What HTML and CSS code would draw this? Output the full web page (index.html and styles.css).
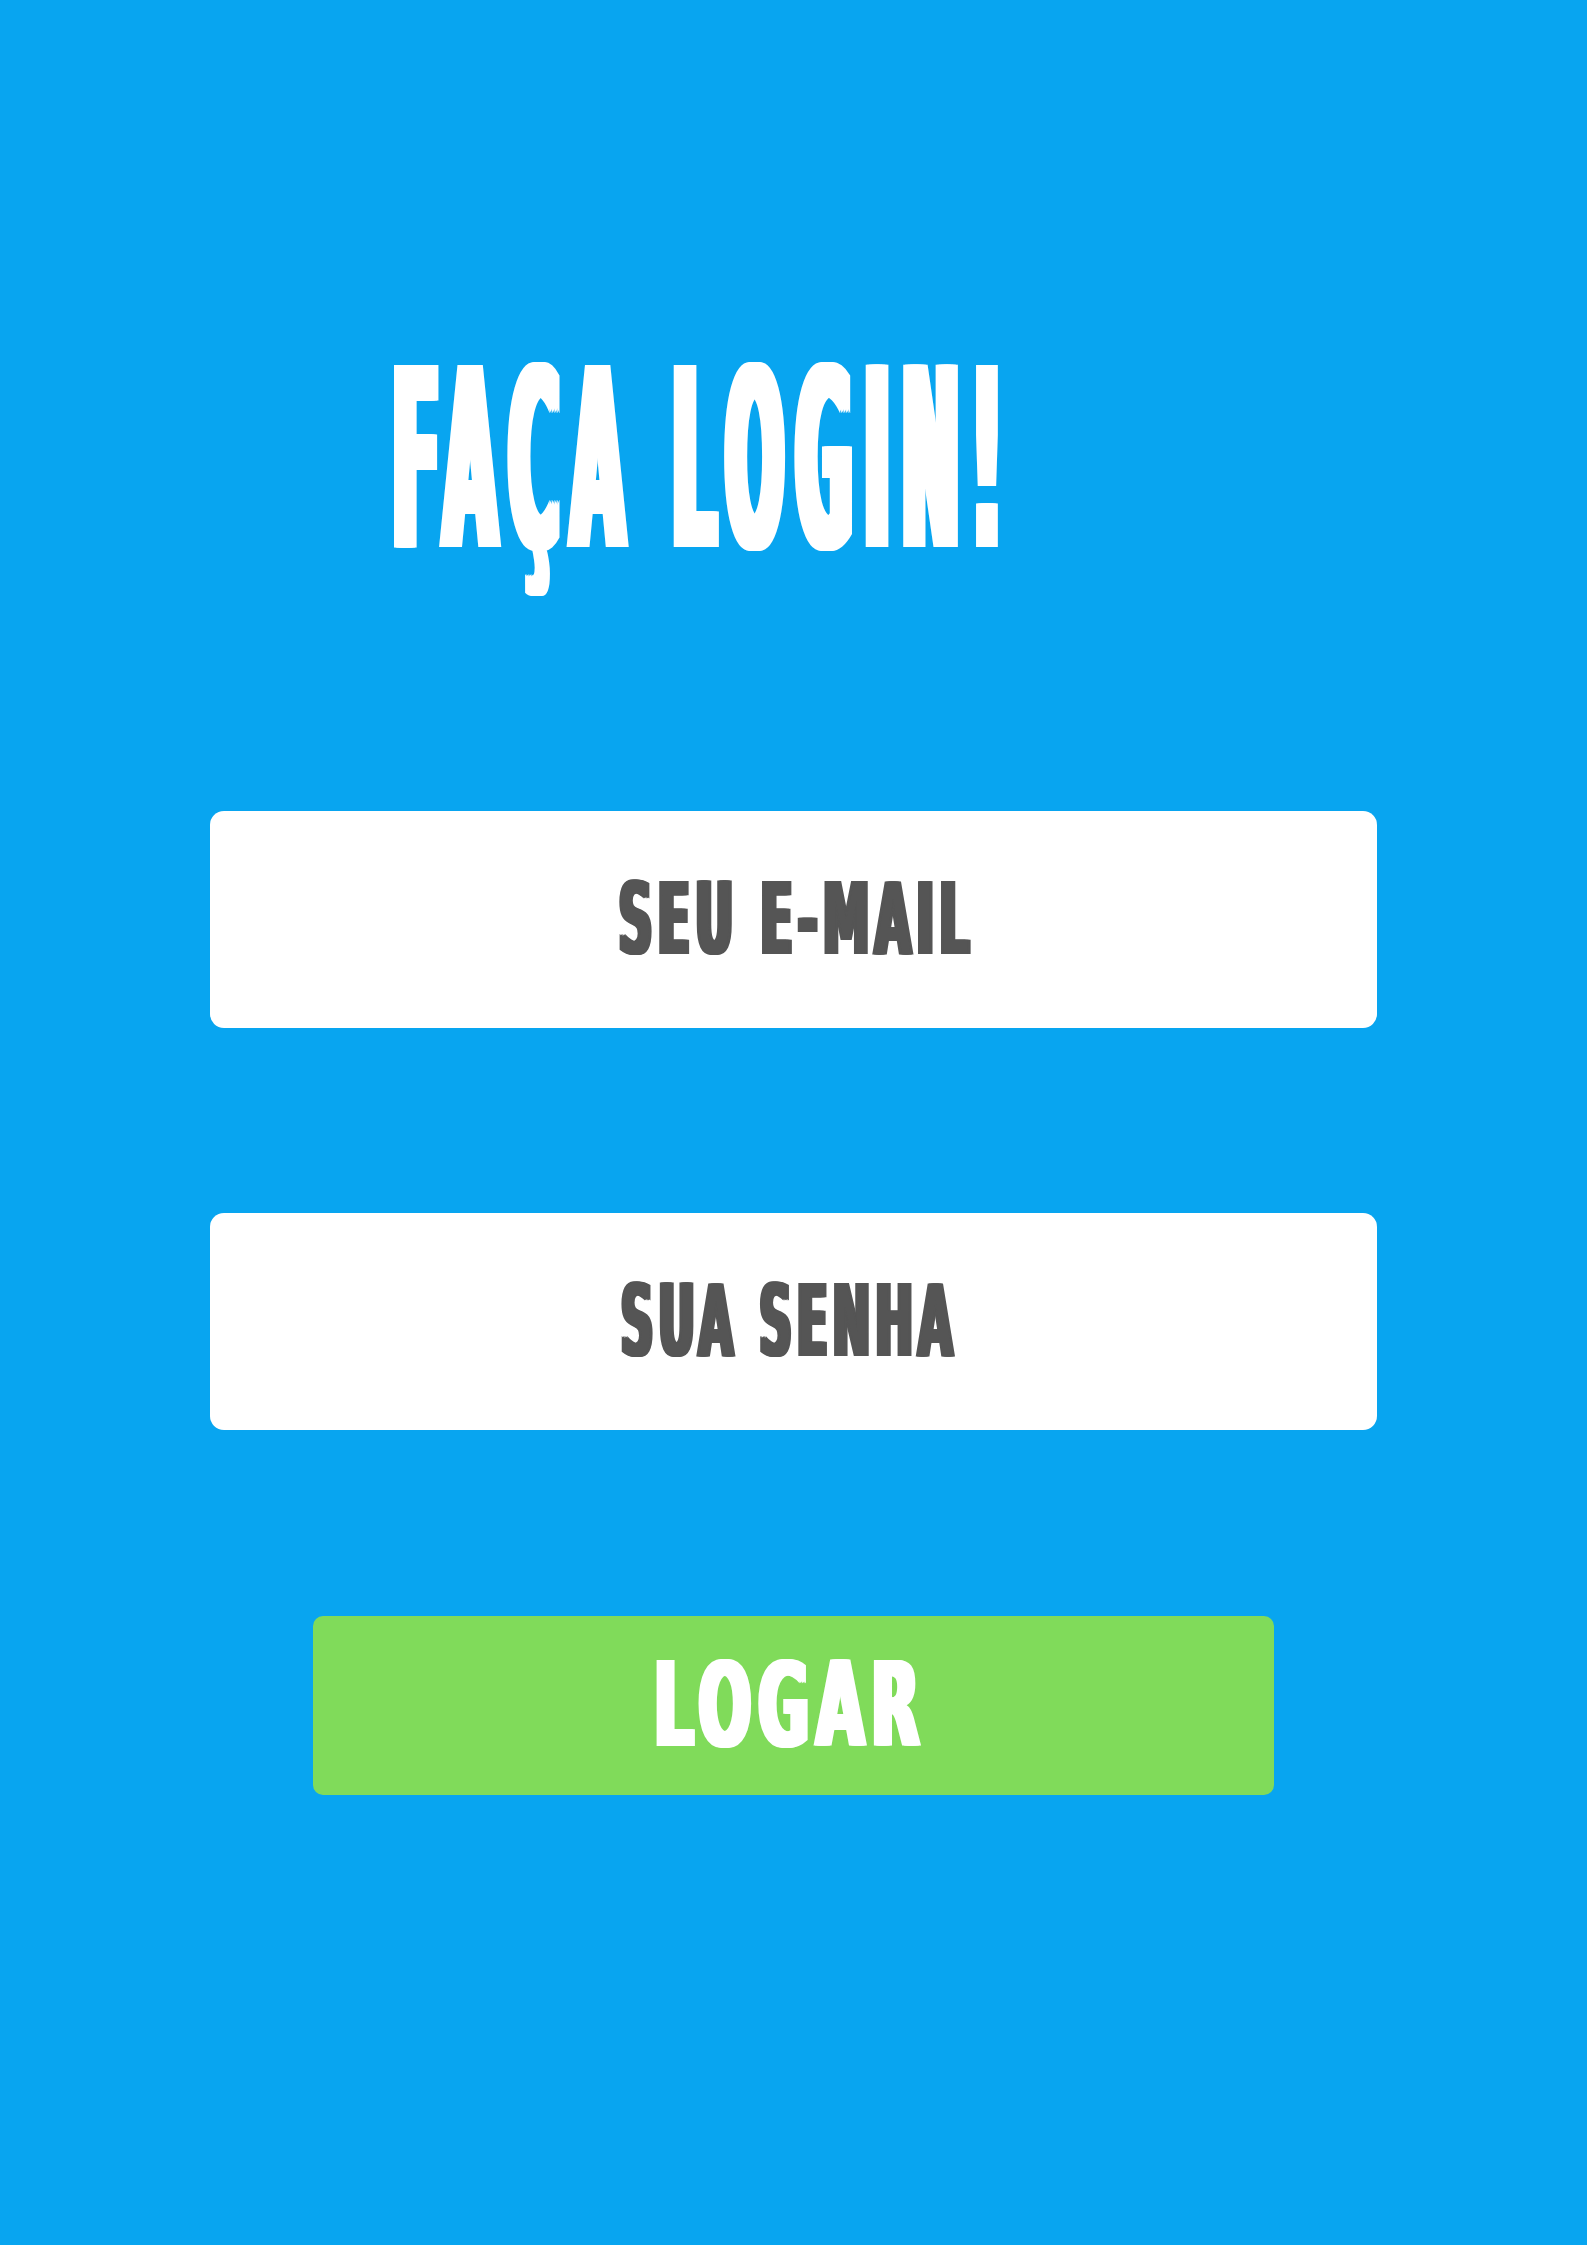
FILE: index.html
```html
<!DOCTYPE html>
<html lang="pt-BR">
<head>
<meta charset="utf-8">
<title>Faça login</title>
<link rel="stylesheet" href="styles.css">
</head>
<body>
<main class="page">
  <h1 class="title"><span class="squash squash-title">FAÇA LOGIN!</span></h1>
  <form class="form" onsubmit="return false">
    <label class="field field-email"><span class="squash squash-email">SEU E-MAIL</span></label>
    <label class="field field-pass"><span class="squash squash-pass">SUA SENHA</span></label>
    <button class="submit" type="submit"><span class="squash squash-btn">LOGAR</span></button>
  </form>
</main>
</body>
</html>
```

FILE: styles.css
```css
html, body {
  margin: 0;
  padding: 0;
}
body {
  background: #08a5f0;
  font-family: "DejaVu Sans", "Liberation Sans", sans-serif;
  font-weight: bold;
}
.page {
  min-height: 2245px;
  display: flex;
  flex-direction: column;
  align-items: center;
  padding-top: 334px;
  box-sizing: border-box;
}
.title {
  margin: 0;
  align-self: stretch;
  display: flex;
  justify-content: center;
  align-items: center;
  padding-right: 192px;
  height: 250px;
  font-size: 125px;
  line-height: 125px;
  color: #ffffff;
  font-weight: bold;
  white-space: nowrap;
}
.squash {
  display: inline-block;
  flex-shrink: 0;
  white-space: nowrap;
  transform-origin: center center;
}
.squash-title {
  letter-spacing: 22.5px;
  text-shadow: -3px 0 0 #fff, 3px 0 0 #fff, -6px 0 0 #fff, 6px 0 0 #fff, -9px 0 0 #fff, 9px 0 0 #fff;
  transform: translateX(6px) scale(0.546, 2);
}
.form {
  margin-top: 227px;
  display: flex;
  flex-direction: column;
  align-items: center;
}
.field {
  width: 1167px;
  height: 217px;
  background: #ffffff;
  border-radius: 14px;
  display: flex;
  align-items: center;
  justify-content: center;
  color: #555555;
  font-size: 99px;
  line-height: 99px;
}
.field-pass {
  margin-top: 185px;
}
.squash-email,
.squash-pass {
  letter-spacing: 12px;
  text-shadow: -3px 0 0 #555, 3px 0 0 #555, -6px 0 0 #555, 6px 0 0 #555;
}
.squash-email {
  transform: translateX(3px) scaleX(0.47);
}
.squash-pass {
  transform: translateX(-4px) scaleX(0.45);
}
.submit {
  margin-top: 186px;
  width: 961px;
  height: 179px;
  border: none;
  border-radius: 10px;
  background: #80db5a;
  color: #ffffff;
  font-family: "DejaVu Sans", "Liberation Sans", sans-serif;
  font-weight: bold;
  font-size: 117px;
  line-height: 117px;
  padding: 0;
  display: flex;
  align-items: center;
  justify-content: center;
}
.squash-btn {
  letter-spacing: 14px;
  text-shadow: -3px 0 0 #fff, 3px 0 0 #fff, -6px 0 0 #fff, 6px 0 0 #fff;
  transform: translateX(-3px) scaleX(0.527);
}
```
